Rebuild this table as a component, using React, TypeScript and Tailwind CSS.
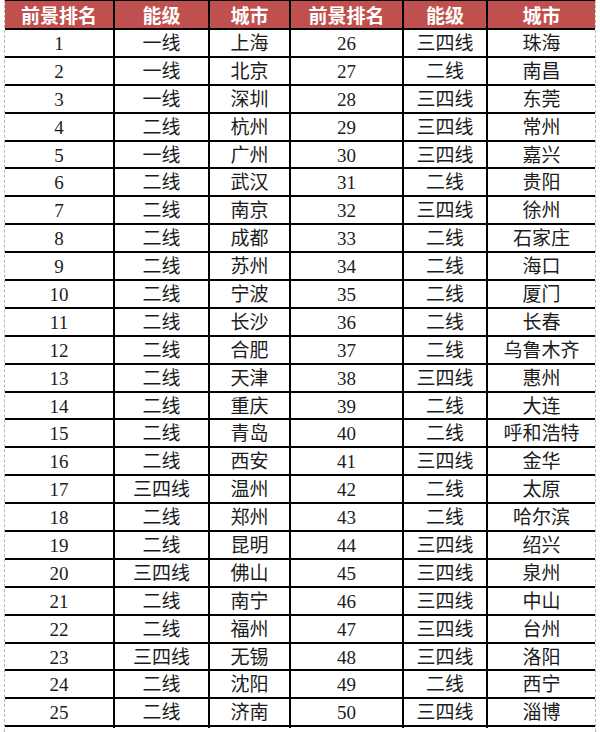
import * as React from "react";

type Row = [number, string, string];

const left: Row[] = [
  [1, "一线", "上海"],
  [2, "一线", "北京"],
  [3, "一线", "深圳"],
  [4, "二线", "杭州"],
  [5, "一线", "广州"],
  [6, "二线", "武汉"],
  [7, "二线", "南京"],
  [8, "二线", "成都"],
  [9, "二线", "苏州"],
  [10, "二线", "宁波"],
  [11, "二线", "长沙"],
  [12, "二线", "合肥"],
  [13, "二线", "天津"],
  [14, "二线", "重庆"],
  [15, "二线", "青岛"],
  [16, "二线", "西安"],
  [17, "三四线", "温州"],
  [18, "二线", "郑州"],
  [19, "二线", "昆明"],
  [20, "三四线", "佛山"],
  [21, "二线", "南宁"],
  [22, "二线", "福州"],
  [23, "三四线", "无锡"],
  [24, "二线", "沈阳"],
  [25, "二线", "济南"],
];

const right: Row[] = [
  [26, "三四线", "珠海"],
  [27, "二线", "南昌"],
  [28, "三四线", "东莞"],
  [29, "三四线", "常州"],
  [30, "三四线", "嘉兴"],
  [31, "二线", "贵阳"],
  [32, "三四线", "徐州"],
  [33, "二线", "石家庄"],
  [34, "二线", "海口"],
  [35, "二线", "厦门"],
  [36, "二线", "长春"],
  [37, "二线", "乌鲁木齐"],
  [38, "三四线", "惠州"],
  [39, "二线", "大连"],
  [40, "二线", "呼和浩特"],
  [41, "三四线", "金华"],
  [42, "二线", "太原"],
  [43, "二线", "哈尔滨"],
  [44, "三四线", "绍兴"],
  [45, "三四线", "泉州"],
  [46, "三四线", "中山"],
  [47, "三四线", "台州"],
  [48, "三四线", "洛阳"],
  [49, "二线", "西宁"],
  [50, "三四线", "淄博"],
];

const cols = "grid grid-cols-[110px_95px_81px_113px_84px_107px]";
const cell = "flex items-center justify-center border-r-2 border-black";

export default function App(): React.ReactElement {
  const headers = ["前景排名", "能级", "城市", "前景排名", "能级", "城市"];

  return (
    <div className="w-[600px] h-[732px] bg-white">
      <div className="ml-[4px] w-[592px] h-[732px] border-x border-dashed border-[#b5b5b5]">
        {/* Header */}
        <div
          className={`${cols} h-[30px] bg-[#c0504d] border-t border-b-2 border-black text-white text-[19px] font-semibold`}
          style={{ fontFamily: '"Noto Sans CJK SC", sans-serif' }}
        >
          {headers.map((h, i) => (
            <div key={i} className={i < 5 ? cell : "flex items-center justify-center"}>
              {h}
            </div>
          ))}
        </div>

        {/* Body rows */}
        <div
          className="text-[19px] text-[#1c1c1c]"
          style={{ fontFamily: '"Liberation Serif", "Noto Sans CJK SC", serif' }}
        >
          {left.map((l, i) => {
            const r = right[i];
            return (
              <div key={i} className={`${cols} h-[27.9px] border-b-2 border-black`}>
                <div className={cell}>{l[0]}</div>
                <div className={cell}>{l[1]}</div>
                <div className={cell}>{l[2]}</div>
                <div className={cell}>{r[0]}</div>
                <div className={cell}>{r[1]}</div>
                <div className="flex items-center justify-center">{r[2]}</div>
              </div>
            );
          })}
        </div>
      </div>
    </div>
  );
}
